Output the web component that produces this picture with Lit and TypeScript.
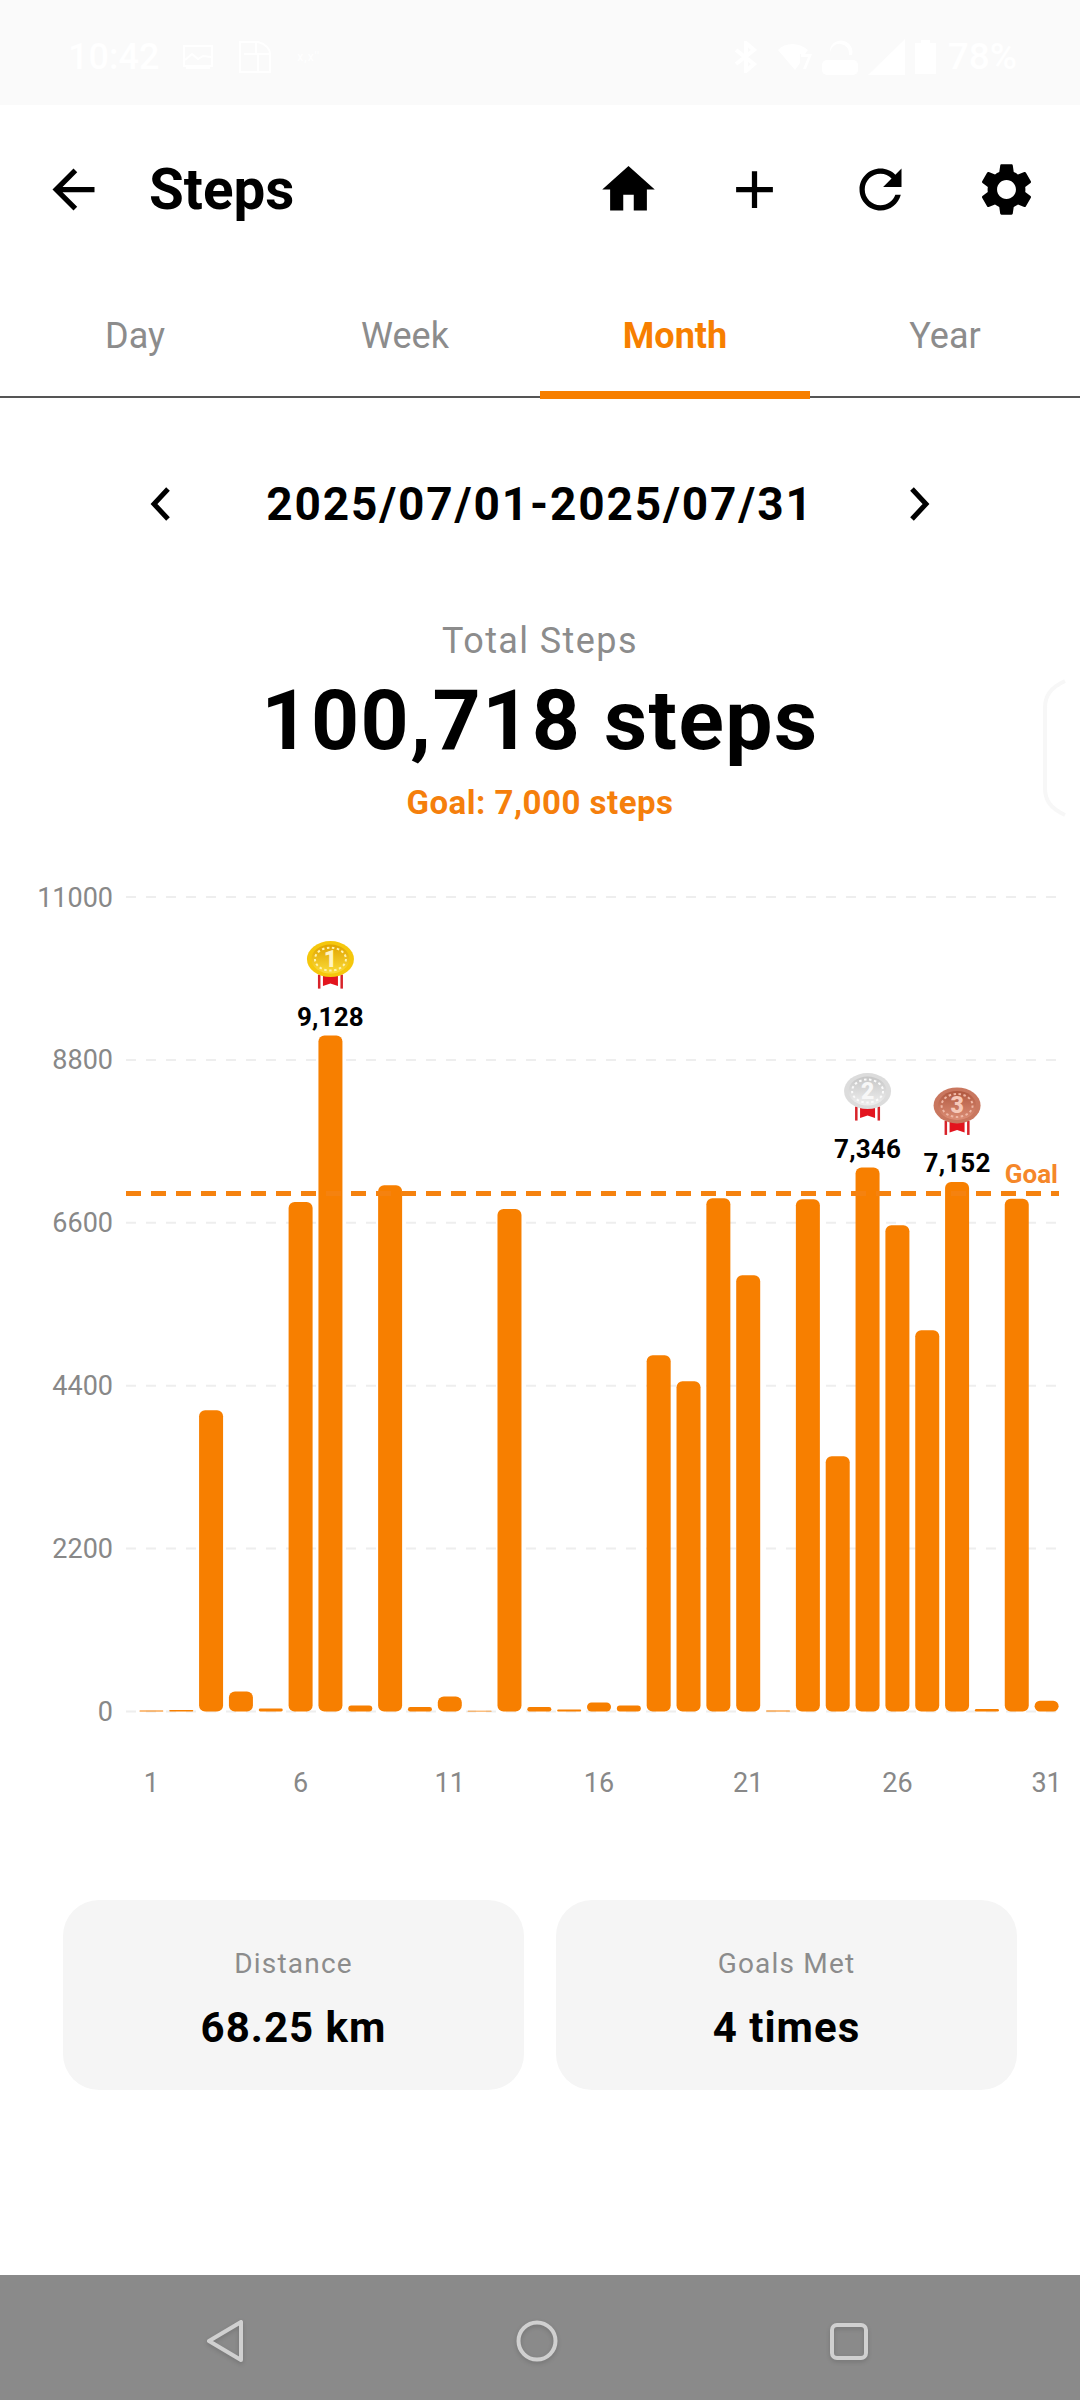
import { LitElement, html, css, svg } from "lit";
import { customElement } from "lit/decorators.js";

const ORANGE = "#f77f00";
// daily steps for the month, read off the bars
const STEPS = [
  13, 20, 4067, 270, 40, 6880, 9128, 81, 7108, 62, 203, 10, 6785, 60, 27, 122,
  81, 4810, 4460, 6932, 5892, 13, 6918, 3446, 7346, 6567, 5149, 7152, 34, 6925,
  145,
];
const TOP3: Record<number, number> = { 6: 1, 24: 2, 27: 3 };
const TICKS = [11000, 8800, 6600, 4400, 2200, 0];
const DAYS = [1, 6, 11, 16, 21, 26, 31];

const BASE = 1710.5;
const SCALE = (BASE - 896) / 11000;
const barX = (i: number) => 151.4 + i * 29.84;
const valY = (v: number) => BASE - v * SCALE;

const MEDALS = [
  { id: "gold", rim: "#f5c70c", a: "#fbdc3a", b: "#e0a300", mark: "#fff3b0", num: "#fff4c4" },
  { id: "silver", rim: "#dcdcdc", a: "#efefef", b: "#c6c6c6", mark: "#fafafa", num: "#f7f7f7" },
  { id: "bronze", rim: "#c9775f", a: "#dc8e76", b: "#b0583f", mark: "#efb7a5", num: "#f6c9b9" },
];

function medal(cx: number, top: number, rank: number) {
  const m = MEDALS[rank - 1];
  const cy = top + 17.5;
  return svg`<g>
    <rect x=${cx - 12.5} y=${top + 33} width="25" height="14" fill="#fff" />
    <rect x=${cx - 12.5} y=${top + 33} width="2.5" height="14" fill="#d8232a" />
    <rect x=${cx + 10} y=${top + 33} width="2.5" height="14" fill="#d8232a" />
    <path d="M${cx - 7.5} ${top + 33}h15v11.5l-7.5 -2.5l-7.5 2.5z" fill="#e3141e" />
    <ellipse cx=${cx} cy=${cy} rx="23.5" ry="18" fill=${m.rim} />
    <ellipse cx=${cx} cy=${cy} rx="19" ry="14.5" fill="url(#${m.id})" />
    <ellipse cx=${cx} cy=${cy} rx="15.5" ry="11.5" fill="none" stroke=${m.mark} stroke-width="2" stroke-dasharray="2.5 2.5" />
    <text class="medal-num" x=${cx} y=${cy + 8} fill=${m.num}>${rank}</text>
  </g>`;
}

@customElement("app-root")
export class AppRoot extends LitElement {
  static styles = css`
    :host {
      display: block;
      width: 1080px;
      height: 2400px;
      background: #fff;
      font-family: Roboto, sans-serif;
      color: #000;
      overflow: hidden;
      position: relative;
    }
    .page {
      display: flex;
      flex-direction: column;
      height: 100%;
    }
    .status {
      height: 105px;
      flex: none;
      background: #fafafa;
      color: #fff;
      display: flex;
      justify-content: space-between;
      align-items: center;
      padding: 8px 63px 0 68px;
      box-sizing: border-box;
    }
    .status-group {
      display: flex;
      align-items: center;
    }
    .clock,
    .battery-text {
      font-size: 37px;
      font-weight: 500;
    }
    .clock {
      font-size: 36px;
    }
    .tiny {
      font-size: 12px;
      letter-spacing: 1px;
    }
    .header {
      height: 169px;
      flex: none;
      display: flex;
      align-items: center;
      padding: 0 42px;
      gap: 63px;
    }
    .header svg {
      width: 63px;
      height: 63px;
      flex: none;
      display: block;
    }
    .title {
      flex: 1;
      margin-left: -19px;
      font-size: 56.5px;
      font-weight: 700;
    }
    .tabs {
      height: 122px;
      flex: none;
      display: flex;
      border-bottom: 2px solid #555;
      margin-bottom: 1px;
      box-sizing: content-box;
    }
    .tab {
      flex: 1;
      display: flex;
      align-items: center;
      justify-content: center;
      position: relative;
      font-size: 36px;
      color: #8c8c8c;
      padding-top: 1px;
    }
    .tab.active {
      color: #f77f00;
      font-weight: 700;
    }
    .tab.active::after {
      content: "";
      position: absolute;
      left: 0;
      right: 0;
      bottom: -3px;
      height: 8px;
      background: #f77f00;
    }
    .date-nav {
      margin-top: 65px;
      height: 80px;
      flex: none;
      display: flex;
      align-items: center;
      justify-content: space-between;
      padding: 0 146px;
    }
    .date-nav svg {
      width: 30px;
      height: 40px;
      display: block;
    }
    .date {
      font-size: 46px;
      font-weight: 700;
      letter-spacing: 1.85px;
    }
    .summary {
      margin-top: 72px;
      flex: none;
      display: flex;
      flex-direction: column;
      align-items: center;
    }
    .total-label {
      font-size: 36px;
      line-height: 50px;
      color: #8c8c8c;
      letter-spacing: 1.4px;
    }
    .total {
      margin-top: 5px;
      font-size: 84px;
      line-height: 100px;
      font-weight: 700;
      letter-spacing: 1.5px;
    }
    .goal {
      margin-top: 12px;
      font-size: 33px;
      line-height: 40px;
      font-weight: 700;
      color: #f57f0c;
      letter-spacing: 0.5px;
    }
    .peek {
      position: absolute;
      left: 1040px;
      top: 678px;
      width: 30px;
      height: 140px;
    }
    .chart {
      margin-top: 38px;
      display: block;
      flex: none;
      width: 1080px;
      height: 950px;
    }
    .y-label,
    .x-label {
      font-size: 27px;
      fill: #888;
    }
    .y-label {
      text-anchor: end;
    }
    .x-label {
      text-anchor: middle;
    }
    .val-label {
      font-size: 26px;
      font-weight: 700;
      text-anchor: middle;
      fill: #000;
      letter-spacing: 0.2px;
    }
    .goal-label {
      font-size: 26px;
      font-weight: 700;
      text-anchor: end;
      fill: #f5872a;
    }
    .medal-num {
      font-size: 23px;
      font-weight: 900;
      text-anchor: middle;
    }
    .cards {
      margin-top: 88.5px;
      flex: none;
      display: flex;
      gap: 32px;
      padding: 0 63px;
    }
    .card {
      flex: 1;
      height: 190px;
      background: #f5f5f5;
      border-radius: 36px;
      display: flex;
      flex-direction: column;
      align-items: center;
      justify-content: center;
      padding-top: 9px;
      box-sizing: border-box;
    }
    .card-label {
      font-size: 28px;
      line-height: 40px;
      color: #8c8c8c;
      letter-spacing: 1.2px;
    }
    .card-value {
      margin-top: 18px;
      font-size: 42px;
      line-height: 52px;
      font-weight: 700;
      letter-spacing: 1px;
    }
    .nav {
      margin-top: auto;
      height: 125px;
      flex: none;
      background: #8a8a8a;
      display: flex;
      align-items: center;
      justify-content: center;
      gap: 252px;
      padding: 6px 6px 0 0;
      box-sizing: border-box;
    }
    .nav svg {
      width: 60px;
      height: 60px;
      display: block;
      filter: drop-shadow(0 2px 2px rgba(0, 0, 0, 0.15));
    }
  `;

  renderStatus() {
    return html`<div class="status">
      <div class="status-group">
        <span class="clock">10:42</span>
        <svg style="margin-left:24px" width="30" height="24" viewBox="0 0 30 24" fill="none" stroke="#fff" stroke-width="2">
          <rect x="1" y="1" width="28" height="20" />
          <path d="M2 15l7-6 6 5 5-3 8 1M3 23h24" />
        </svg>
        <svg style="margin-left:25px" width="36" height="34" viewBox="0 0 36 34" fill="none" stroke="#fff" stroke-width="2">
          <path d="M2 32V2h18c8 2 12 7 12 12v18zM18 2v12M6 14h26M20 14v18" />
        </svg>
        <span class="tiny" style="margin-left:23px">x,x''</span>
      </div>
      <div class="status-group">
        <svg width="24" height="32" viewBox="0 0 24 32" fill="none" stroke="#fff" stroke-width="4">
          <path d="M2 9l18 14-8 7V2l8 7L2 23" />
        </svg>
        <svg style="margin-left:20px" width="35" height="28" viewBox="0 0 35 28" fill="#fff">
          <path d="M0 7c7-8 21-8 30 0l-3 4h-5v9l-5 7z" />
          <path d="M23 11h11l-6 15h-3l5-12h-7z" />
        </svg>
        <svg style="margin-left:9px" width="36" height="36" viewBox="0 0 36 36" fill="#fff">
          <path d="M8 10a10 10 0 0 1 22 6h-3a7 7 0 0 0-19-3z" />
          <rect x="0" y="21" width="36" height="15" rx="5" />
        </svg>
        <svg style="margin-left:10px" width="37" height="36" viewBox="0 0 37 36" fill="#fff">
          <path d="M0 36L37 0v36z" />
        </svg>
        <svg style="margin-left:10px" width="21" height="34" viewBox="0 0 21 34" fill="#fff">
          <path d="M6 0h9v3h6v31H0V3h6z" />
        </svg>
        <span class="battery-text" style="margin-left:12px">78%</span>
      </div>
    </div>`;
  }

  renderHeader() {
    return html`<div class="header">
      <svg viewBox="0 0 24 24"><path d="M20 11H7.83l5.59-5.59L12 4l-8 8 8 8 1.41-1.41L7.83 13H20v-2z" /></svg>
      <div class="title">Steps</div>
      <svg viewBox="0 0 24 24"><path d="M10 20v-6h4v6h5v-8h3L12 3 2 12h3v8z" /></svg>
      <svg viewBox="0 0 24 24"><path d="M19 13h-6v6h-2v-6H5v-2h6V5h2v6h6v2z" /></svg>
      <svg viewBox="0 0 24 24"><path d="M17.65 6.35C16.2 4.9 14.21 4 12 4c-4.42 0-7.99 3.58-7.99 8s3.57 8 7.99 8c3.73 0 6.84-2.55 7.73-6h-2.08c-.82 2.33-3.04 4-5.65 4-3.31 0-6-2.69-6-6s2.69-6 6-6c1.66 0 3.14.69 4.22 1.78L13 11h7V4l-2.35 2.35z" /></svg>
      <svg viewBox="0 0 24 24"><path d="M19.14 12.94c.04-.3.06-.61.06-.94 0-.32-.02-.64-.07-.94l2.03-1.58c.18-.14.23-.41.12-.61l-1.92-3.32c-.12-.22-.37-.29-.59-.22l-2.39.96c-.5-.38-1.03-.7-1.62-.94l-.36-2.54c-.04-.24-.24-.41-.48-.41h-3.84c-.24 0-.43.17-.47.41l-.36 2.54c-.59.24-1.13.57-1.62.94l-2.39-.96c-.22-.08-.47 0-.59.22L2.74 8.87c-.12.21-.08.47.12.61l2.03 1.58c-.05.3-.09.63-.09.94s.02.64.07.94l-2.03 1.58c-.18.14-.23.41-.12.61l1.92 3.32c.12.22.37.29.59.22l2.39-.96c.5.38 1.03.7 1.62.94l.36 2.54c.05.24.24.41.48.41h3.84c.24 0 .44-.17.47-.41l.36-2.54c.59-.24 1.13-.56 1.62-.94l2.39.96c.22.08.47 0 .59-.22l1.92-3.32c.12-.22.07-.47-.12-.61l-2.01-1.58zM12 15.6c-1.98 0-3.6-1.62-3.6-3.6s1.62-3.6 3.6-3.6 3.6 1.62 3.6 3.6-1.62 3.6-3.6 3.6z" /></svg>
    </div>`;
  }

  renderChart() {
    return html`<svg class="chart" viewBox="0 860 1080 950">
      <defs>
        ${MEDALS.map(
          (m) => svg`<linearGradient id=${m.id} x1="0" y1="0" x2="0" y2="1">
            <stop offset="0" stop-color=${m.b} />
            <stop offset="1" stop-color=${m.a} />
          </linearGradient>`
        )}
      </defs>
      ${TICKS.map(
        (t) => svg`
          <line x1="126" x2="1059" y1=${valY(t)} y2=${valY(t)} stroke="#eee" stroke-width="2" stroke-dasharray="10 10" />
          <text class="y-label" x="113" y=${valY(t) + 9.5}>${t}</text>`
      )}
      ${STEPS.map((v, i) => {
        const h = v * SCALE;
        const rx = Math.min(6, h / 2);
        return svg`<rect x=${barX(i) - 12} y=${BASE - h} width="24" height=${h} rx=${rx} fill=${ORANGE} />`;
      })}
      <line x1="126" x2="1059" y1="1192.5" y2="1192.5" stroke="#f5820f" stroke-width="5" stroke-dasharray="15 10" />
      <text class="goal-label" x="1058" y="1182">Goal</text>
      ${Object.entries(TOP3).map(([k, rank]) => {
        const i = Number(k);
        const y = valY(STEPS[i]) - 10;
        return svg`
          <text class="val-label" x=${barX(i)} y=${y}>${STEPS[i].toLocaleString("en-US")}</text>
          ${medal(barX(i), y - 84, rank)}`;
      })}
      ${DAYS.map((d) => svg`<text class="x-label" x=${barX(d - 1)} y="1791">${d}</text>`)}
    </svg>`;
  }

  render() {
    return html`<div class="page">
      ${this.renderStatus()} ${this.renderHeader()}
      <div class="tabs">
        <div class="tab">Day</div>
        <div class="tab">Week</div>
        <div class="tab active">Month</div>
        <div class="tab">Year</div>
      </div>
      <div class="date-nav">
        <svg viewBox="0 0 30 40" fill="none" stroke="#000" stroke-width="5"><path d="M22 5L8 20l14 15" /></svg>
        <div class="date">2025/07/01-2025/07/31</div>
        <svg viewBox="0 0 30 40" fill="none" stroke="#000" stroke-width="5"><path d="M8 5l14 15L8 35" /></svg>
      </div>
      <div class="summary">
        <div class="total-label">Total Steps</div>
        <div class="total">100,718 steps</div>
        <div class="goal">Goal: 7,000 steps</div>
      </div>
      ${this.renderChart()}
      <div class="cards">
        <div class="card">
          <div class="card-label">Distance</div>
          <div class="card-value">68.25 km</div>
        </div>
        <div class="card">
          <div class="card-label">Goals Met</div>
          <div class="card-value">4 times</div>
        </div>
      </div>
      <div class="nav">
        <svg viewBox="0 0 60 60" fill="none" stroke="#d0d0d0" stroke-width="4" stroke-linejoin="round"><path d="M46 11v38L14 30z" /></svg>
        <svg viewBox="0 0 60 60" fill="none" stroke="#d0d0d0" stroke-width="4"><circle cx="30" cy="30" r="18.5" /></svg>
        <svg viewBox="0 0 60 60" fill="none" stroke="#d0d0d0" stroke-width="4"><rect x="13" y="14" width="34" height="33" rx="5" /></svg>
      </div>
      <svg class="peek" viewBox="0 0 30 140" fill="none" stroke="#f7f7f7" stroke-width="4"><path d="M25 3C10 10 5 18 5 30v80c0 12 5 20 20 27" /></svg>
    </div>`;
  }
}
